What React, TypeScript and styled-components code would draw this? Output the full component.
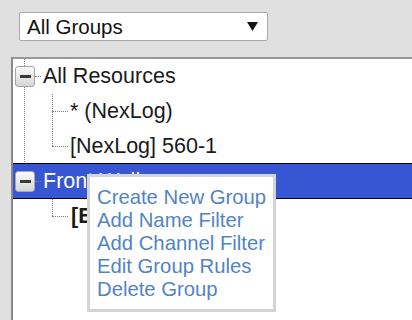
import React from "react";
import styled, { createGlobalStyle, css } from "styled-components";

const Global = createGlobalStyle`
  html, body { margin: 0; padding: 0; overflow: hidden; }
  body {
    background: #e0e0e0;
    font-family: "Liberation Sans", Arial, sans-serif;
    width: 412px;
    height: 320px;
  }
`;

const Page = styled.div`
  position: relative;
  width: 412px;
  height: 320px;
  overflow: hidden;
  padding-top: 12px;
  box-sizing: border-box;
`;

const Select = styled.div`
  margin-left: 19px;
  width: 249px;
  height: 29px;
  box-sizing: border-box;
  background: #fff;
  border: 1px solid #a9a9a9;
  border-radius: 2px;
  display: flex;
  align-items: center;
  justify-content: space-between;
  padding: 0 9px 0 7px;
  font-size: 20.5px;
  color: #111;
`;

const Panel = styled.div`
  margin-top: 16px;
  margin-left: 11px;
  width: 440px;
  height: 300px;
  background: #fff;
  border-top: 2px solid #999;
  border-left: 2px solid #8a8a8a;
`;

const List = styled.ul`
  list-style: none;
  margin: 0;
  padding: 0;
`;

const Node = styled.li<{ $level: number; $last?: boolean }>`
  position: relative;
  &::before {
    content: "";
    position: absolute;
    left: ${(p) => (p.$level === 0 ? 11 : 39)}px;
    top: 0;
    height: ${(p) => (p.$last ? "17px" : "100%")};
    border-left: 1px dotted #808080;
  }
  ${(p) =>
    p.$level === 1 &&
    css`
      &::after {
        content: "";
        position: absolute;
        left: 39px;
        top: 17px;
        width: 16px;
        border-top: 1px dotted #808080;
      }
    `}
`;

const Row = styled.div<{ $level: number; $selected?: boolean }>`
  position: relative;
  height: 35px;
  display: flex;
  align-items: center;
  padding-left: ${(p) => (p.$level === 0 ? 2 : 57)}px;
  font-size: 21.5px;
  color: #1a1a1a;
  white-space: nowrap;
  ${(p) =>
    p.$selected &&
    css`
      background: #3656d4;
      color: #fff;
      border-top: 1px solid #000;
      border-bottom: 1px solid #000;
      height: 34px;
      margin-top: -1px;
    `}
`;

const Toggle = styled.span`
  position: relative;
  z-index: 1;
  width: 20px;
  height: 21px;
  box-sizing: border-box;
  border: 1px solid #a5a5a5;
  border-radius: 3px;
  background: linear-gradient(#fbfbfb, #d6d6d6);
  display: flex;
  align-items: center;
  justify-content: center;
  flex: none;
  &::after {
    content: "";
    width: 11px;
    height: 3px;
    background: #3a3a3a;
  }
`;

const Stub = styled.span`
  width: 6px;
  margin-right: 2px;
  border-top: 1px dotted #808080;
  flex: none;
`;

const Label = styled.span<{ $bold?: boolean }>`
  font-weight: ${(p) => (p.$bold ? 700 : 400)};
  margin-left: ${(p) => (p.$bold ? 1 : 0)}px;
`;

const Menu = styled.ul`
  position: absolute;
  left: 87px;
  top: 174px;
  width: 189px;
  height: 138px;
  box-sizing: border-box;
  margin: 0;
  padding: 9px 0 0 7px;
  list-style: none;
  background: #fff;
  border: 3px solid #d4d4d4;
  font-size: 20.3px;
  line-height: 23px;
  color: #5284c2;
`;

const MenuItem = styled.li`
  white-space: nowrap;
`;

const Arrow = () => (
  <svg width="11" height="9" viewBox="0 0 11 9">
    <path d="M0 0 H11 L5.5 9 Z" fill="#111" />
  </svg>
);

export default function App() {
  return (
    <>
      <Global />
      <Page>
        <Select>
          <span>All Groups</span>
          <Arrow />
        </Select>
        <Panel>
          <List>
            <Node $level={0}>
              <Row $level={0}>
                <Toggle />
                <Stub />
                <Label>All Resources</Label>
              </Row>
              <List>
                <Node $level={1}>
                  <Row $level={1}>
                    <Label>* (NexLog)</Label>
                  </Row>
                </Node>
                <Node $level={1} $last>
                  <Row $level={1}>
                    <Label>[NexLog] 560-1</Label>
                  </Row>
                </Node>
              </List>
            </Node>
            <Node $level={0} $last>
              <Row $level={0} $selected>
                <Toggle />
                <Stub />
                <Label>Front Wall</Label>
              </Row>
              <List>
                <Node $level={1} $last>
                  <Row $level={1}>
                    <Label $bold>[EXT] Front Wall</Label>
                  </Row>
                </Node>
              </List>
            </Node>
          </List>
        </Panel>
        <Menu>
          <MenuItem>Create New Group</MenuItem>
          <MenuItem>Add Name Filter</MenuItem>
          <MenuItem>Add Channel Filter</MenuItem>
          <MenuItem>Edit Group Rules</MenuItem>
          <MenuItem>Delete Group</MenuItem>
        </Menu>
      </Page>
    </>
  );
}
